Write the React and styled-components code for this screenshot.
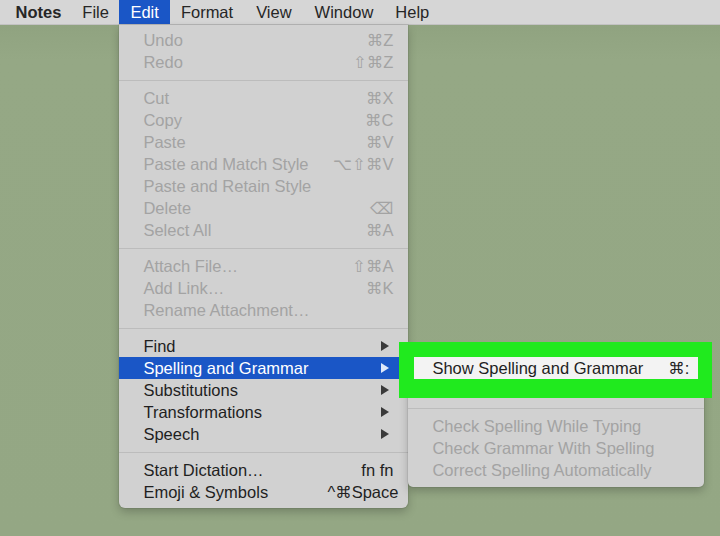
import React from 'react';
import styled, { createGlobalStyle } from 'styled-components';

const GlobalStyle = createGlobalStyle`
  html, body {
    margin: 0;
    padding: 0;
  }
  body {
    font-family: 'Liberation Sans', 'DejaVu Sans', Arial, sans-serif;
  }
`;

const Screen = styled.div`
  width: 720px;
  height: 536px;
  overflow: hidden;
  background: linear-gradient(180deg, #7e9171 0px, #8fa27f 18px, #95a885 60px, #94a784 100%);
`;

const MenuBar = styled.div`
  display: flex;
  align-items: stretch;
  height: 25px;
  padding-left: 5px;
  background: #d6d6d6;
  border-bottom: 1px solid #c2c2c2;
  box-sizing: border-box;
  font-size: 16.5px;
  color: #262626;
`;

const BarItem = styled.div`
  position: relative;
  display: flex;
  align-items: center;
  padding: 0 ${(p) => p.$pad || 10.5}px;
  font-weight: ${(p) => (p.$bold ? 700 : 400)};
  background: ${(p) => (p.$open ? '#1a56c6' : 'transparent')};
  color: ${(p) => (p.$open ? '#ffffff' : 'inherit')};
`;

const Dropdown = styled.div`
  position: absolute;
  top: 25px;
  left: 0;
  width: 289px;
  padding: 4px 0 5px;
  background: #d1d1d1;
  border-radius: 0 0 6px 6px;
  box-shadow: 0 4px 10px rgba(0, 0, 0, 0.22), 0 0 0 1px rgba(0, 0, 0, 0.06);
  font-weight: 400;
  color: #1f1f1f;
  z-index: 2;
`;

const Row = styled.div`
  position: relative;
  display: flex;
  align-items: center;
  justify-content: space-between;
  height: 22px;
  padding: 0 15px 0 24px;
  white-space: nowrap;
  color: ${(p) => (p.$disabled ? '#a3a3a3' : p.$active ? '#ffffff' : '#1f1f1f')};
  background: ${(p) => (p.$active ? '#1a56c6' : p.$lit ? '#f3f3f3' : 'transparent')};
`;

const Shortcut = styled.span`
  font-family: 'Liberation Sans', 'DejaVu Sans', sans-serif;
  margin-right: ${(p) => (p.$wide ? '-5px' : '0')};
`;

const Arrow = styled.span`
  width: 0;
  height: 0;
  margin-right: 4px;
  border-top: 5px solid transparent;
  border-bottom: 5px solid transparent;
  border-left: 8px solid ${(p) => (p.$active ? '#dfe8fa' : '#3a3a3a')};
`;

const Separator = styled.div`
  height: 14px;
  display: flex;
  align-items: center;

  &::after {
    content: '';
    flex: 1;
    height: 1px;
    background: #bcbcbc;
  }
`;

const SubMenu = styled.div`
  position: absolute;
  left: 100%;
  top: -4px;
  width: 296px;
  padding: 4px 0 6px;
  background: #d1d1d1;
  border-radius: 5px;
  box-shadow: 0 4px 10px rgba(0, 0, 0, 0.22), 0 0 0 1px rgba(0, 0, 0, 0.06);
`;

const SubRow = styled(Row)`
  padding: 0 15px 0 24px;
`;

const HighlightFrame = styled.div`
  position: absolute;
  left: -9px;
  top: -11px;
  width: 313px;
  height: 56px;
  box-sizing: border-box;
  border-style: solid;
  border-color: #20ea1e;
  border-width: 15px 14px 19px 15px;
  pointer-events: none;
`;

const editItems = [
  { label: 'Undo', key: '⌘Z', disabled: true },
  { label: 'Redo', key: '⇧⌘Z', disabled: true },
  'sep',
  { label: 'Cut', key: '⌘X', disabled: true },
  { label: 'Copy', key: '⌘C', disabled: true },
  { label: 'Paste', key: '⌘V', disabled: true },
  { label: 'Paste and Match Style', key: '⌥⇧⌘V', disabled: true },
  { label: 'Paste and Retain Style', disabled: true },
  { label: 'Delete', key: '⌫', disabled: true },
  { label: 'Select All', key: '⌘A', disabled: true },
  'sep',
  { label: 'Attach File…', key: '⇧⌘A', disabled: true },
  { label: 'Add Link…', key: '⌘K', disabled: true },
  { label: 'Rename Attachment…', disabled: true },
  'sep',
  { label: 'Find', sub: true },
  { label: 'Spelling and Grammar', sub: true, active: true },
  { label: 'Substitutions', sub: true },
  { label: 'Transformations', sub: true },
  { label: 'Speech', sub: true },
  'sep',
  { label: 'Start Dictation…', key: 'fn fn' },
  { label: 'Emoji & Symbols', key: '^⌘Space', wide: true },
];

const spellingItems = [
  { label: 'Show Spelling and Grammar', key: '⌘:', lit: true },
  { label: 'Check Document Now', key: '⌘;' },
  'sep',
  { label: 'Check Spelling While Typing', disabled: true },
  { label: 'Check Grammar With Spelling', disabled: true },
  { label: 'Correct Spelling Automatically', disabled: true },
];

function SpellingMenu() {
  return (
    <SubMenu>
      {spellingItems.map((item, i) =>
        item === 'sep' ? (
          <Separator key={i} />
        ) : (
          <SubRow key={i} $disabled={item.disabled} $lit={item.lit}>
            <span>{item.label}</span>
            {item.key && <Shortcut>{item.key}</Shortcut>}
          </SubRow>
        )
      )}
      <HighlightFrame />
    </SubMenu>
  );
}

function EditMenu() {
  return (
    <Dropdown>
      {editItems.map((item, i) =>
        item === 'sep' ? (
          <Separator key={i} />
        ) : (
          <Row key={i} $disabled={item.disabled} $active={item.active}>
            <span>{item.label}</span>
            {item.key && <Shortcut $wide={item.wide}>{item.key}</Shortcut>}
            {item.sub && <Arrow $active={item.active} />}
            {item.active && <SpellingMenu />}
          </Row>
        )
      )}
    </Dropdown>
  );
}

export default function App() {
  return (
    <>
      <GlobalStyle />
      <Screen>
        <MenuBar>
          <BarItem $bold>Notes</BarItem>
          <BarItem>File</BarItem>
          <BarItem $open $pad={11}>
            Edit
            <EditMenu />
          </BarItem>
          <BarItem $pad={11}>Format</BarItem>
          <BarItem $pad={12}>View</BarItem>
          <BarItem $pad={11}>Window</BarItem>
          <BarItem $pad={11}>Help</BarItem>
        </MenuBar>
      </Screen>
    </>
  );
}
